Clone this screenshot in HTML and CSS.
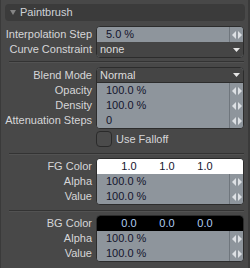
FILE: index.html
```html
<!DOCTYPE html>
<html lang="en">
<head>
  <meta charset="UTF-8">
  <title>Paintbrush</title>
  <link rel="stylesheet" href="styles.css">
</head>
<body>
  <div class="panel">
    <!-- Cabecera del panel -->
    <div class="panel__head">
      <svg class="panel__caret" width="6" height="5" viewBox="0 0 6 5"><path d="M0 0h6L3 5z"></path></svg>
      <span>Paintbrush</span>
    </div>

    <div class="group">
      <div class="labels">
        <span>Interpolation Step</span>
        <span>Curve Constraint</span>
      </div>
      <div class="box">
        <div class="field">
          <span class="field__value">5.0 %</span>
          <span class="spin"><svg width="10" height="8" viewBox="0 0 10 8"><path d="M4 0v8L0 4zM6 0v8l4-4z"></path></svg></span>
        </div>
        <div class="field field--menu field--last">
          <span class="field__value">none</span>
          <span class="drop"><svg width="7" height="4" viewBox="0 0 7 4"><path d="M0 0h7L3.5 4z"></path></svg></span>
        </div>
      </div>
    </div>

    <div class="divider"></div>

    <div class="group group--tight">
      <div class="labels">
        <span>Blend Mode</span>
        <span>Opacity</span>
        <span>Density</span>
        <span>Attenuation Steps</span>
      </div>
      <div class="box">
        <div class="field field--menu">
          <span class="field__value">Normal</span>
          <span class="drop"><svg width="7" height="4" viewBox="0 0 7 4"><path d="M0 0h7L3.5 4z"></path></svg></span>
        </div>
        <div class="field">
          <span class="field__value">100.0 %</span>
          <span class="spin"><svg width="10" height="8" viewBox="0 0 10 8"><path d="M4 0v8L0 4zM6 0v8l4-4z"></path></svg></span>
        </div>
        <div class="field">
          <span class="field__value">100.0 %</span>
          <span class="spin"><svg width="10" height="8" viewBox="0 0 10 8"><path d="M4 0v8L0 4zM6 0v8l4-4z"></path></svg></span>
        </div>
        <div class="field">
          <span class="field__value">0</span>
          <span class="spin"><svg width="10" height="8" viewBox="0 0 10 8"><path d="M4 0v8L0 4zM6 0v8l4-4z"></path></svg></span>
        </div>
      </div>
    </div>

    <div class="check">
      <span class="check__box"></span>
      <span>Use Falloff</span>
    </div>

    <div class="divider divider--check"></div>

    <div class="group group--color">
      <div class="labels">
        <span>FG Color</span>
        <span>Alpha</span>
        <span>Value</span>
      </div>
      <div class="box">
        <div class="swatch swatch--fg">
          <span>1.0</span><span>1.0</span><span>1.0</span>
        </div>
        <div class="field">
          <span class="field__value">100.0 %</span>
          <span class="spin"><svg width="10" height="8" viewBox="0 0 10 8"><path d="M4 0v8L0 4zM6 0v8l4-4z"></path></svg></span>
        </div>
        <div class="field">
          <span class="field__value">100.0 %</span>
          <span class="spin"><svg width="10" height="8" viewBox="0 0 10 8"><path d="M4 0v8L0 4zM6 0v8l4-4z"></path></svg></span>
        </div>
      </div>
    </div>

    <div class="divider divider--color"></div>

    <div class="group group--color">
      <div class="labels">
        <span>BG Color</span>
        <span>Alpha</span>
        <span>Value</span>
      </div>
      <div class="box">
        <div class="swatch swatch--bg">
          <span>0.0</span><span>0.0</span><span>0.0</span>
        </div>
        <div class="field">
          <span class="field__value">100.0 %</span>
          <span class="spin"><svg width="10" height="8" viewBox="0 0 10 8"><path d="M4 0v8L0 4zM6 0v8l4-4z"></path></svg></span>
        </div>
        <div class="field">
          <span class="field__value">100.0 %</span>
          <span class="spin"><svg width="10" height="8" viewBox="0 0 10 8"><path d="M4 0v8L0 4zM6 0v8l4-4z"></path></svg></span>
        </div>
      </div>
    </div>
  </div>
</body>
</html>
```

FILE: styles.css
```css
:root {
  --panel-bg: #484848;
  --field-bg: #8e959c;
  --edge: #2c2c2c;
  --label: #d6d6d8;
  --ink: #14142c;
}
* {
  box-sizing: border-box;
}
body {
  margin: 0;
  background-color: var(--panel-bg);
  font-family: 'Liberation Sans', Arial, sans-serif;
  font-size: 11px;
}
.panel {
  width: 250px;
  height: 268px;
  border-left: 1px solid #3a3a3a;
  border-right: 2px solid #3a3a3a;
  padding: 4px 3px 0 0;
  background-color: var(--panel-bg);
  color: var(--label);
  overflow: hidden;
}
/* Cabecera */
.panel__head {
  height: 17px;
  margin-left: 4px;
  padding-left: 5px;
  border-radius: 4px;
  background-color: #3b3b3b;
  display: flex;
  align-items: center;
  gap: 4px;
  line-height: 17px;
  color: #cfd2d8;
}
.panel__caret {
  fill: #858585;
}
/* Grupos de campos */
.group {
  display: flex;
  gap: 4px;
  margin: 5px 1px 0 0;
}
.group--tight {
  margin-top: 4px;
}
.group--color {
  margin-top: 3px;
}
.labels {
  width: 91px;
  flex: none;
  display: flex;
  flex-direction: column;
  padding-top: 1px;
  text-align: right;
}
.labels span {
  height: 15px;
  line-height: 15px;
  white-space: nowrap;
}
.box {
  flex: 1;
  border: 1px solid var(--edge);
  border-radius: 4px;
  overflow: hidden;
  background-color: var(--field-bg);
}
.field {
  height: 15px;
  display: flex;
  background-color: var(--field-bg);
  color: var(--ink);
}
.field__value {
  flex: 1;
  padding-left: 9px;
  line-height: 15px;
  white-space: nowrap;
}
.field--menu {
  background-color: #454545;
  color: #dcdcdc;
  border-bottom: 1px solid var(--edge);
}
.field--menu .field__value {
  padding-left: 3px;
  line-height: 14px;
}
.field--last {
  border-bottom: none;
}
.spin {
  width: 14px;
  flex: none;
  border-left: 1px solid #6f767d;
  display: flex;
  align-items: center;
  justify-content: center;
  fill: #dde0e4;
}
.drop {
  width: 14px;
  flex: none;
  display: flex;
  align-items: center;
  justify-content: center;
  fill: #e6e6e6;
}
/* Separadores */
.divider {
  height: 2px;
  margin: 3px 1px 0 8px;
  border-top: 1px solid #333333;
  border-bottom: 1px solid #525252;
}
.divider--check {
  margin-top: 6px;
}
.divider--color {
  margin-top: 5px;
}
/* Casilla */
.check {
  display: flex;
  align-items: center;
  gap: 4px;
  margin-top: 2px;
  padding-left: 95px;
  height: 16px;
}
.check__box {
  width: 16px;
  height: 16px;
  border: 1px solid #2a2a2a;
  border-radius: 4px;
  background-color: #4b4b4b;
}
/* Colores */
.swatch {
  height: 15px;
  display: grid;
  grid-template-columns: repeat(3, 38px);
  padding-left: 13px;
  text-align: center;
  line-height: 15px;
}
.swatch--fg {
  background-color: #ffffff;
  color: var(--ink);
}
.swatch--bg {
  background-color: #000000;
  color: #b0cdf2;
}
```
